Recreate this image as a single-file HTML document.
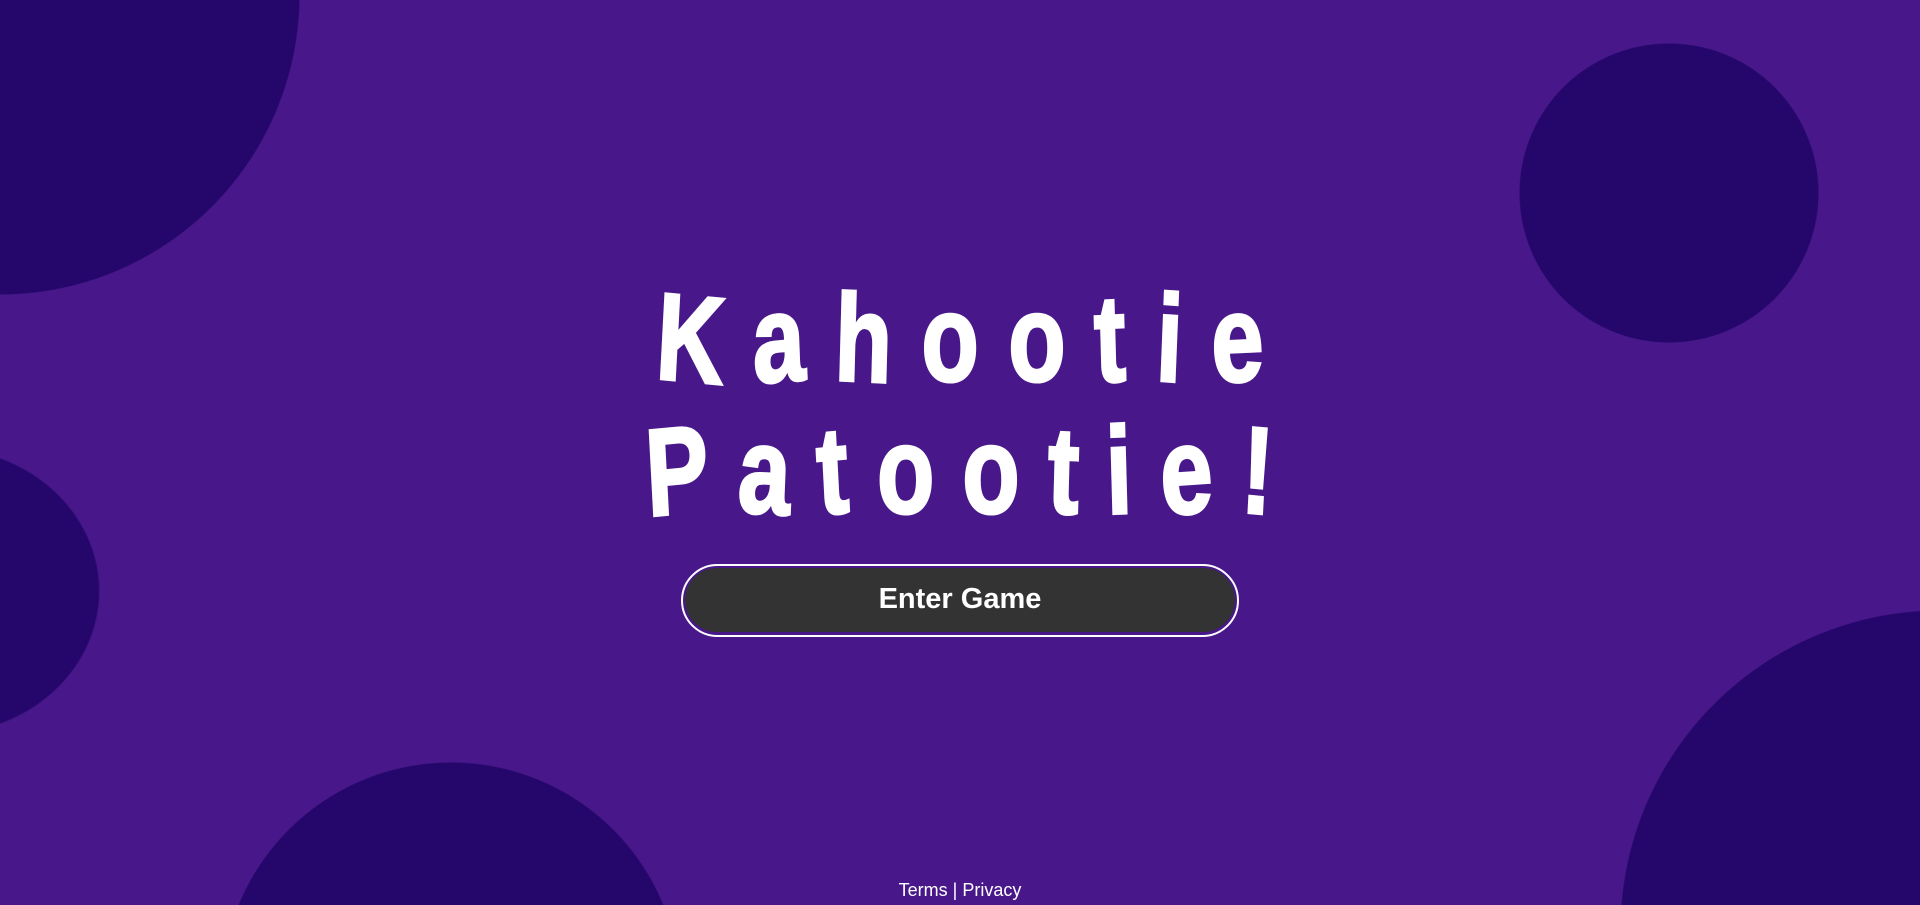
<!DOCTYPE html>
<html><head><meta charset="utf-8"><style>
html,body{margin:0;padding:0;width:1920px;height:905px;overflow:hidden}
body{font-family:"Liberation Sans",Arial,sans-serif}
#w{position:relative;width:1920px;height:905px;overflow:hidden;
background:
radial-gradient(circle 300px at 0px -5px,#25076b 299px,transparent 300px),
radial-gradient(circle 150px at 1669px 193px,#25076b 149px,transparent 150px),
radial-gradient(ellipse 160px 144px at -60px 591px,#25076b 99%,transparent 100%),
radial-gradient(circle 230px at 451px 992px,#25076b 229px,transparent 230px),
radial-gradient(circle 320px at 1940px 930px,#25076b 319px,transparent 320px),
#48188b}
.t{position:absolute;left:0;width:1920px;text-align:center;color:#fff;font-weight:bold;font-size:120px;line-height:120px;height:120px;white-space:nowrap;-webkit-text-stroke:3px #fff}
.t span{display:inline-block;transform-origin:50% 70%}
.in{display:inline-block;transform:scale(0.78,1.03)}
.btn{position:absolute;left:681px;top:564px;width:554px;height:69px;border:2px solid #fff;border-radius:37px;}
.btn div{position:absolute;left:2px;top:2px;right:2px;bottom:3px;background:#333;border-radius:34px;color:#fff;font-weight:bold;font-size:29px;text-align:center;line-height:63px}
.f{position:absolute;left:0;width:1920px;top:879px;text-align:center;color:#fff;font-size:18px;line-height:22px}
</style></head><body><div id="w">
<div class="t" style="top:279px"><div class="in"><span style="margin:0 19px;transform:rotate(4deg)">K</span><span style="margin:0 19px;transform:rotate(-3deg)">a</span><span style="margin:0 19px;transform:rotate(2deg)">h</span><span style="margin:0 19px">o</span><span style="margin:0 19px">o</span><span style="margin:0 19px;transform:rotate(-2deg)">t</span><span style="margin:0 19px;transform:rotate(3deg)">i</span><span style="margin:0 19px;transform:rotate(-2deg)">e</span></div></div>
<div class="t" style="top:411px"><div class="in"><span style="margin:0 18px;transform:rotate(-4deg)">P</span><span style="margin:0 18px;transform:rotate(3deg)">a</span><span style="margin:0 18px;transform:rotate(-4deg)">t</span><span style="margin:0 18px">o</span><span style="margin:0 18px">o</span><span style="margin:0 18px;transform:rotate(2deg)">t</span><span style="margin:0 18px;transform:rotate(-2deg)">i</span><span style="margin:0 18px;transform:rotate(-3deg)">e</span><span style="margin:0 18px;transform:rotate(4deg)">!</span></div></div>
<div class="btn"><div>Enter Game</div></div>
<div class="f">Terms | Privacy</div>
</div></body></html>
